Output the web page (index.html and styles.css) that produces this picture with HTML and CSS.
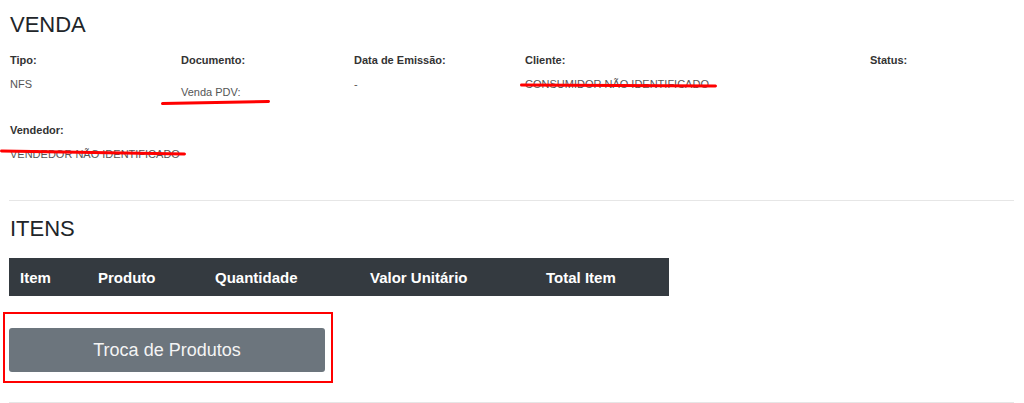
FILE: index.html
```html
<!DOCTYPE html>
<html lang="pt-BR">
<head>
    <meta charset="UTF-8">
    <meta name="viewport" content="width=device-width, initial-scale=1.0">
    <title>Venda</title>
    <link rel="stylesheet" href="styles.css">
</head>
<body>
    <div class="page">
        <h2 class="title">VENDA</h2>

        <div class="info">
            <div class="field">
                <p class="label">Tipo:</p>
                <p class="value">NFS</p>
            </div>
            <div class="field">
                <p class="label">Documento:</p>
                <p class="value doc">Venda PDV:</p>
            </div>
            <div class="field">
                <p class="label">Data de Emissão:</p>
                <p class="value">-</p>
            </div>
            <div class="field">
                <p class="label">Cliente:</p>
                <p class="value">CONSUMIDOR NÃO IDENTIFICADO</p>
            </div>
            <div class="field">
                <p class="label">Status:</p>
                <p class="value"></p>
            </div>
            <div class="field">
                <p class="label">Vendedor:</p>
                <p class="value nowrap">VENDEDOR NÃO IDENTIFICADO</p>
            </div>
        </div>

        <hr class="divider divider-top">

        <h2 class="title title-items">ITENS</h2>

        <div class="items-head">
            <span>Item</span>
            <span>Produto</span>
            <span>Quantidade</span>
            <span>Valor Unitário</span>
            <span>Total Item</span>
        </div>

        <div class="mark-box">
            <button class="btn-troca">Troca de Produtos</button>
        </div>

        <hr class="divider divider-bottom">

        <!-- red pen marks over the screenshot -->
        <span class="pen pen-doc"></span>
        <span class="pen pen-cliente"></span>
        <span class="pen pen-vendedor"></span>
    </div>
</body>
</html>
```

FILE: styles.css
```css
body {
    margin: 0;
    background: #fff;
    font-family: "Liberation Sans", Arial, sans-serif;
    color: #212529;
}

.page {
    position: relative;
    padding: 12px 10px 0 9px;
}

.title {
    font-size: 22px;
    line-height: 26px;
    font-weight: 400;
    margin: 0 0 0 1px;
    color: #212529;
}

.info {
    display: grid;
    grid-template-columns: 171px 173px 171px 345px 1fr;
    row-gap: 22px;
    margin-top: 14px;
    padding-left: 1px;
}

.field p {
    margin: 0;
    font-size: 11px;
    line-height: 16px;
}

.label {
    font-weight: bold;
    color: #333;
}

.value {
    margin-top: 8px !important;
    color: #555;
    min-height: 16px;
}

.value.doc {
    padding-top: 8px;
}

.nowrap {
    white-space: nowrap;
}

.divider {
    border: none;
    border-top: 1px solid #e6e6e6;
    margin: 0;
}

.divider-top {
    margin-top: 38px;
}

.title-items {
    margin-top: 15px;
}

.items-head {
    display: grid;
    grid-template-columns: 78px 117px 155px 176px 134px;
    width: 660px;
    height: 38px;
    align-items: center;
    margin-top: 16px;
    background: #343a40;
    color: #fff;
    font-size: 15px;
    font-weight: bold;
}

.items-head span {
    padding-left: 11px;
}

.mark-box {
    width: 316px;
    margin: 16px 0 0 -6px;
    padding: 14px 6px 9px 4px;
    border: 2px solid #f00;
}

.btn-troca {
    display: block;
    width: 316px;
    height: 44px;
    border: none;
    border-radius: 3px;
    background: #6c757d;
    color: #f4f4f4;
    font-family: "Liberation Sans", Arial, sans-serif;
    font-size: 18px;
    cursor: pointer;
}

.divider-bottom {
    margin-top: 19px;
}

.pen {
    position: absolute;
    height: 3px;
    background: #f00;
    border-radius: 2px;
}

.pen-doc {
    left: 161px;
    top: 101px;
    width: 109px;
    transform: rotate(-1.2deg);
}

.pen-cliente {
    left: 520px;
    top: 84px;
    width: 197px;
    transform: rotate(0.3deg);
}

.pen-vendedor {
    left: 0;
    top: 151px;
    width: 186px;
    transform: rotate(1deg);
}
```
